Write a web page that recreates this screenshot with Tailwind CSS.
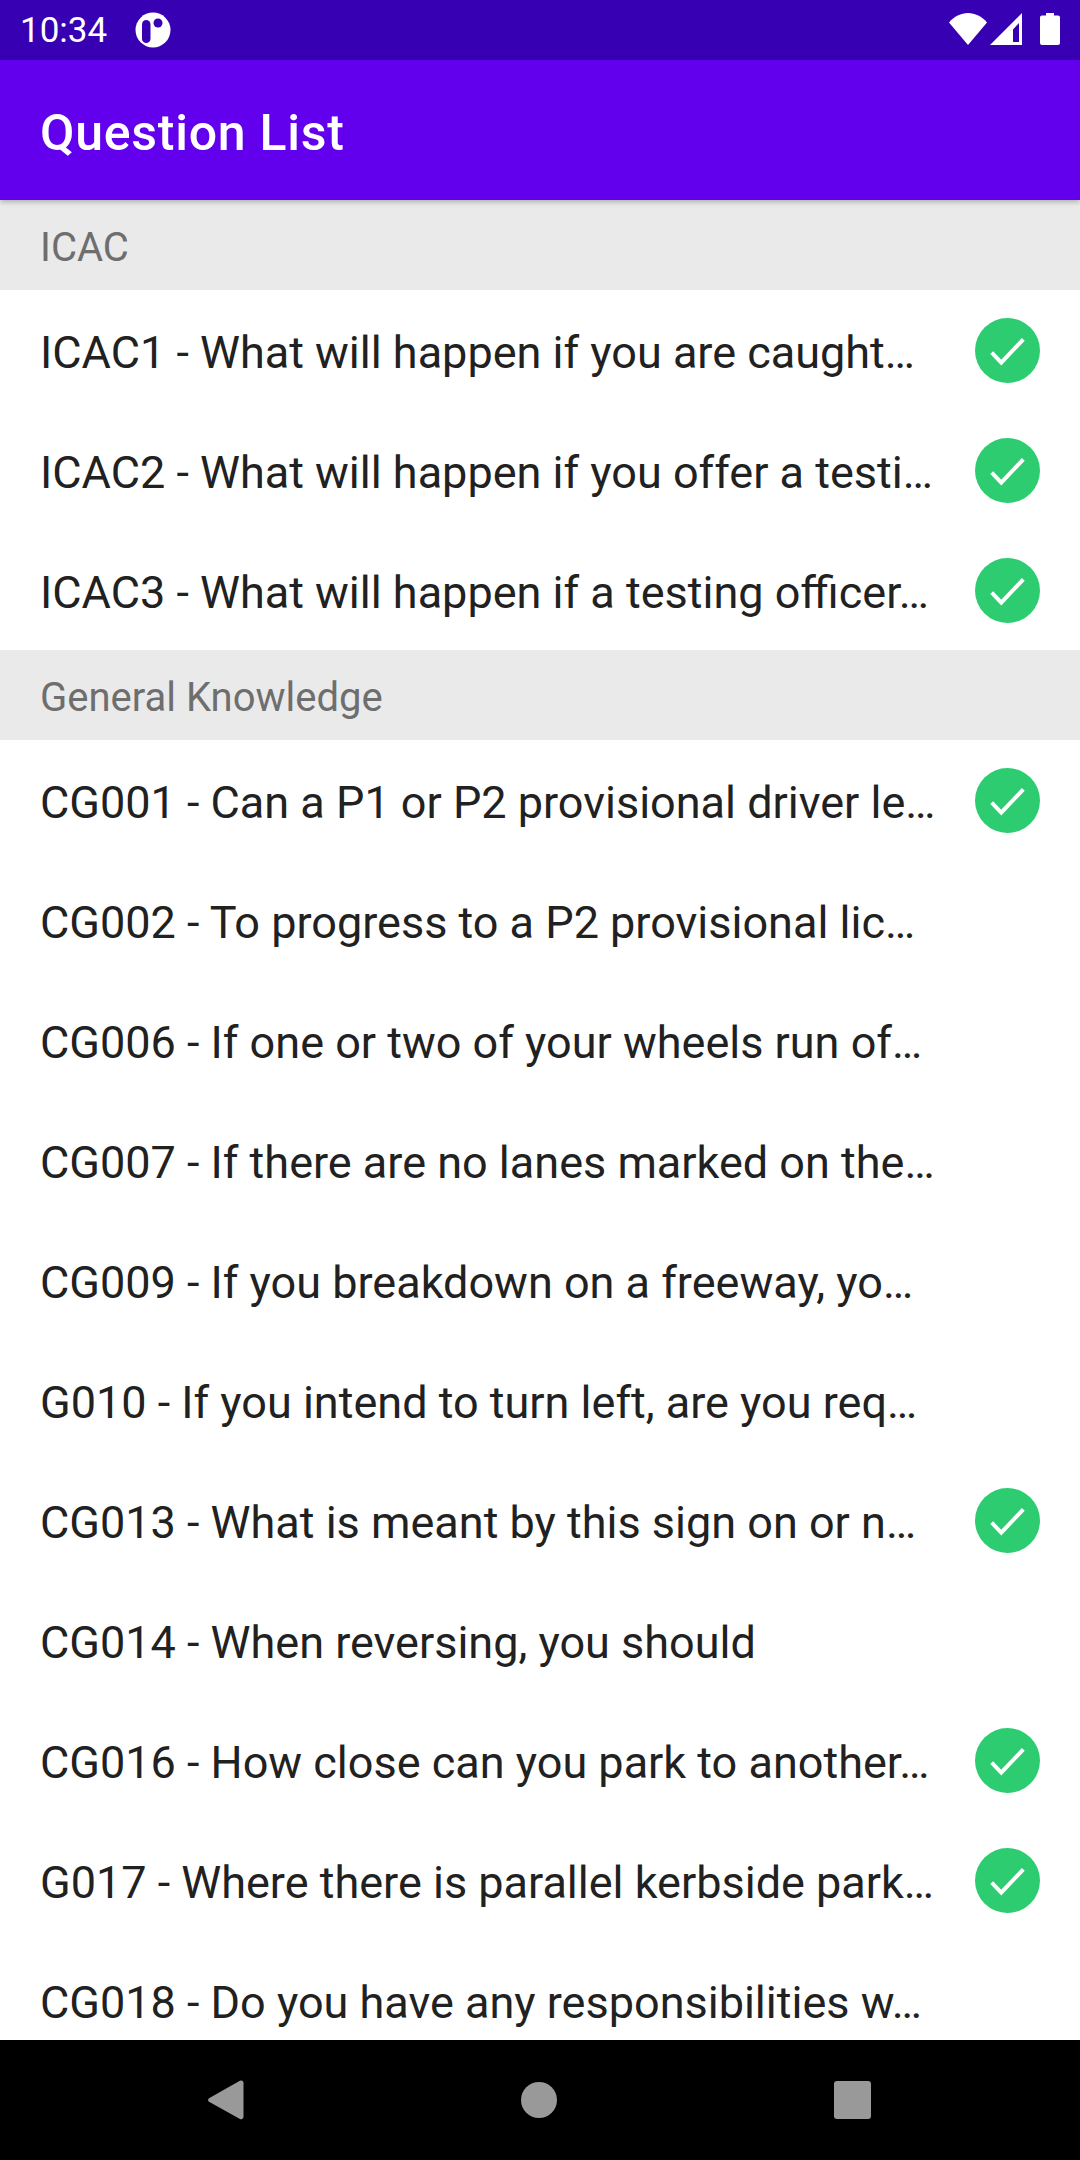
<!DOCTYPE html>
<html>
<head>
  <meta charset="UTF-8" />
  <script src="https://cdn.jsdelivr.net/npm/@tailwindcss/browser@4"></script>
  <title>Question List</title>
</head>
<body class="bg-white font-['Roboto',sans-serif]">
  <div class="flex flex-col w-[1080px] h-[2160px] overflow-hidden">
    <!-- status bar -->
    <div class="h-[60px] shrink-0 bg-[#3700B3] flex items-center text-white pl-5 pr-5">
      <span class="text-[35px] leading-none">10:34</span>
      <svg class="ml-[28px]" width="36" height="36" viewBox="0 0 36 36">
        <circle cx="18" cy="18" r="17.5" fill="#fff"/>
        <rect x="7" y="8" width="8.500" height="23" rx="4.250" fill="#3700B3"/>
        <circle cx="23" cy="11" r="4.500" fill="#3700B3"/>
      </svg>
      <div class="ml-auto flex items-center mb-[2px]">
        <svg width="38" height="32" viewBox="0 0 38 32"><path d="M0 9.500C5 3.500 12 0 19 0s14 3.500 19 9.500L19 32z" fill="#fff"/></svg>
        <svg class="ml-[3px]" width="33" height="32" viewBox="0 0 33 32"><path fill-rule="evenodd" d="M32 0v32H0zM29 10l-6 6.500V29h6z" fill="#fff"/></svg>
        <svg class="ml-[17px]" width="20" height="32" viewBox="0 0 20 32"><path d="M6 0h8v2.500h4a2 2 0 0 1 2 2V30a2 2 0 0 1-2 2H2a2 2 0 0 1-2-2V4.500a2 2 0 0 1 2-2h4z" fill="#fff"/></svg>
      </div>
    </div>

    <!-- toolbar -->
    <div class="h-[140px] shrink-0 bg-[#6200EE] flex items-center px-10 relative z-10 shadow-[0_2px_5px_rgba(0,0,0,0.25)]">
      <h1 class="text-[50px] font-medium text-white leading-none tracking-[0.75px] pt-[6px]">Question List</h1>
    </div>

    <!-- question list -->
    <div class="flex-1 overflow-hidden text-[45px] text-[#212121]">
      <div class="h-[90px] bg-[#EAEAEA] flex items-center px-10 text-[40px] text-[#6e6e6e]"><span class="pt-[6px]">ICAC</span></div>
      <div class="h-[120px] flex items-center justify-between pl-10 pr-[40px]">
        <span class="whitespace-nowrap pt-[6px]">ICAC1 - What will happen if you are caught…</span>
        <svg width="65" height="65" viewBox="0 0 65 65"><circle cx="32.500" cy="32.500" r="32.500" fill="#2ECC71"/><path d="M16.700 34.700l9.600 10 22-23.400" fill="none" stroke="#fff" stroke-width="4"/></svg>
      </div>
      <div class="h-[120px] flex items-center justify-between pl-10 pr-[40px]">
        <span class="whitespace-nowrap pt-[6px]">ICAC2 - What will happen if you offer a testi…</span>
        <svg width="65" height="65" viewBox="0 0 65 65"><circle cx="32.500" cy="32.500" r="32.500" fill="#2ECC71"/><path d="M16.700 34.700l9.600 10 22-23.400" fill="none" stroke="#fff" stroke-width="4"/></svg>
      </div>
      <div class="h-[120px] flex items-center justify-between pl-10 pr-[40px]">
        <span class="whitespace-nowrap pt-[6px]">ICAC3 - What will happen if a testing officer…</span>
        <svg width="65" height="65" viewBox="0 0 65 65"><circle cx="32.500" cy="32.500" r="32.500" fill="#2ECC71"/><path d="M16.700 34.700l9.600 10 22-23.400" fill="none" stroke="#fff" stroke-width="4"/></svg>
      </div>
      <div class="h-[90px] bg-[#EAEAEA] flex items-center px-10 text-[40px] text-[#6e6e6e]"><span class="pt-[6px]">General Knowledge</span></div>
      <div class="h-[120px] flex items-center justify-between pl-10 pr-[40px]">
        <span class="whitespace-nowrap pt-[6px]">CG001 - Can a P1 or P2 provisional driver le…</span>
        <svg width="65" height="65" viewBox="0 0 65 65"><circle cx="32.500" cy="32.500" r="32.500" fill="#2ECC71"/><path d="M16.700 34.700l9.600 10 22-23.400" fill="none" stroke="#fff" stroke-width="4"/></svg>
      </div>
      <div class="h-[120px] flex items-center pl-10 pr-[40px]"><span class="whitespace-nowrap pt-[6px]">CG002 - To progress to a P2 provisional lic…</span></div>
      <div class="h-[120px] flex items-center pl-10 pr-[40px]"><span class="whitespace-nowrap pt-[6px]">CG006 - If one or two of your wheels run of…</span></div>
      <div class="h-[120px] flex items-center pl-10 pr-[40px]"><span class="whitespace-nowrap pt-[6px]">CG007 - If there are no lanes marked on the…</span></div>
      <div class="h-[120px] flex items-center pl-10 pr-[40px]"><span class="whitespace-nowrap pt-[6px]">CG009 - If you breakdown on a freeway, yo…</span></div>
      <div class="h-[120px] flex items-center pl-10 pr-[40px]"><span class="whitespace-nowrap pt-[6px]">G010 - If you intend to turn left, are you req…</span></div>
      <div class="h-[120px] flex items-center justify-between pl-10 pr-[40px]">
        <span class="whitespace-nowrap pt-[6px]">CG013 - What is meant by this sign on or n…</span>
        <svg width="65" height="65" viewBox="0 0 65 65"><circle cx="32.500" cy="32.500" r="32.500" fill="#2ECC71"/><path d="M16.700 34.700l9.600 10 22-23.400" fill="none" stroke="#fff" stroke-width="4"/></svg>
      </div>
      <div class="h-[120px] flex items-center pl-10 pr-[40px]"><span class="whitespace-nowrap pt-[6px]">CG014 - When reversing, you should</span></div>
      <div class="h-[120px] flex items-center justify-between pl-10 pr-[40px]">
        <span class="whitespace-nowrap pt-[6px]">CG016 - How close can you park to another…</span>
        <svg width="65" height="65" viewBox="0 0 65 65"><circle cx="32.500" cy="32.500" r="32.500" fill="#2ECC71"/><path d="M16.700 34.700l9.600 10 22-23.400" fill="none" stroke="#fff" stroke-width="4"/></svg>
      </div>
      <div class="h-[120px] flex items-center justify-between pl-10 pr-[40px]">
        <span class="whitespace-nowrap pt-[6px]">G017 - Where there is parallel kerbside park…</span>
        <svg width="65" height="65" viewBox="0 0 65 65"><circle cx="32.500" cy="32.500" r="32.500" fill="#2ECC71"/><path d="M16.700 34.700l9.600 10 22-23.400" fill="none" stroke="#fff" stroke-width="4"/></svg>
      </div>
      <div class="h-[120px] flex items-center pl-10 pr-[40px]"><span class="whitespace-nowrap pt-[6px]">CG018 - Do you have any responsibilities w…</span></div>
    </div>

    <!-- nav bar -->
    <div class="h-[120px] shrink-0 bg-black flex items-center justify-between pl-[208px] pr-[209px]">
      <svg width="36" height="40" viewBox="0 0 36 40"><path d="M33 0.500a2.500 2.500 0 0 1 2.500 2.500v34a2.500 2.500 0 0 1-4 1.800L1 21.800a2.500 2.500 0 0 1 0-3.600L31 1.200a3 3 0 0 1 2-0.700z" fill="#999"/></svg>
      <div class="w-[36px] h-[36px] rounded-full bg-[#999]"></div>
      <div class="w-[37px] h-[38px] rounded-[3px] bg-[#999]"></div>
    </div>
  </div>
</body>
</html>
